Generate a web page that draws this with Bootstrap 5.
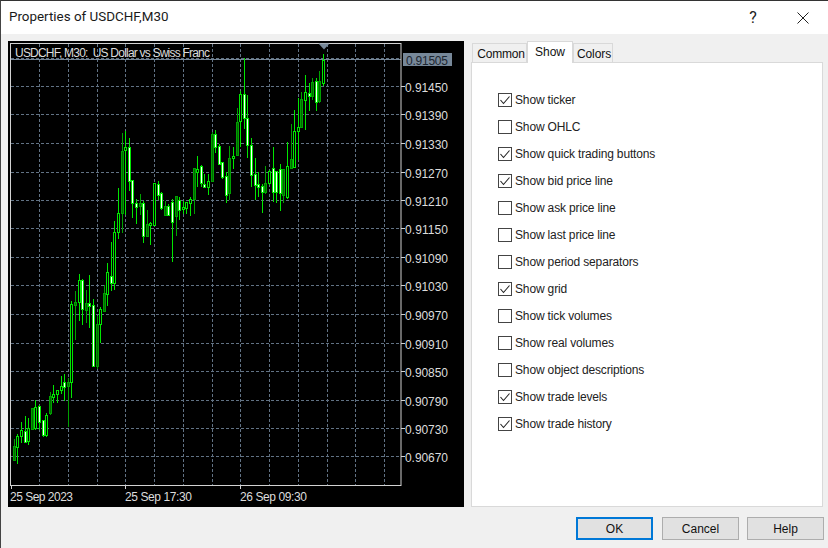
<!DOCTYPE html>
<html lang="en">
<head>
<meta charset="utf-8">
<title>Properties of USDCHF,M30</title>
<link href="https://cdn.jsdelivr.net/npm/bootstrap@5.3.0/dist/css/bootstrap.min.css" rel="stylesheet">
<style>
html,body{height:100%;}
body{margin:0;background:#f0f0f0;overflow:hidden;font-family:"Liberation Sans",sans-serif;font-size:12px;color:#111;}
.dlg-win{width:828px;height:548px;border-top:1px solid #333;border-left:1px solid #444;}
.dlg-title{height:33px;background:#fff;padding:0 0 0 8px;}
.dlg-title-text{font-family:Roboto,"Liberation Sans",sans-serif;font-size:13.4px;color:#1a1a1a;}
.dlg-help{font-family:Roboto,"Liberation Sans",sans-serif;font-size:16px;width:20px;text-align:center;margin-right:34px;color:#222;}
.dlg-close{margin-right:19px;}
.dlg-main{padding:7px 5px 0 7px;gap:7px;height:474px;}
.dlg-chart{width:456px;height:466px;display:block;flex:none;background:#000;}
.dlg-side{width:352px;height:466px;}
.dlg-tabs{height:21px;border:0;padding-left:1px;align-items:flex-end;}
.dlg-tabs .nav-link{height:19px;padding:1px 0 0;text-align:center;font-size:12px;line-height:19px;color:#111;background:#f0f0f0;border:1px solid #d9d9d9;border-bottom:0;border-radius:0;margin:0;}
.dlg-tabs .nav-link.active{height:22px;padding:1px 0 0;line-height:18px;background:#fff;color:#111;border-color:#d9d9d9;position:relative;z-index:1;margin-bottom:-1px;}
.dlg-tabs .nav-link.tab-common{width:55px;padding-left:3px;letter-spacing:-.2px;}
.tab-show{width:46px;}
.dlg-tabs .nav-link.tab-colors{width:40px;padding-left:2px;letter-spacing:-.1px;}
.dlg-pane{background:#fff;border:1px solid #d9d9d9;height:445px;padding:23px 0 0 26px;}
.dlg-check{height:27px;margin:0;padding:0;gap:3px;}
.dlg-check .form-check-input{float:none;margin:0;width:14px;height:14px;border:1px solid #444;border-radius:0;background-color:#fff;box-shadow:none;flex:none;}
.dlg-check .form-check-input:checked{background-color:#fff;border-color:#444;background-size:12px 12px;background-image:url("data:image/svg+xml,%3csvg xmlns='http://www.w3.org/2000/svg' viewBox='0 0 12 12'%3e%3cpath fill='none' stroke='%23222' stroke-width='1.1' d='M1.5 6 L4.5 9.500 L10.500 2.500'/%3e%3c/svg%3e");}
.dlg-check .form-check-label{font-size:12px;letter-spacing:-.15px;color:#222;}
.dlg-foot{padding:9px 4px 0 0;gap:8px;}
.dlg-btn{width:77px;height:23px;padding:1px 0 0;font-size:12px;line-height:19px;background:#e1e1e1;color:#111;border:1px solid #adadad;border-radius:0;}
.dlg-btn-main{border:2px solid #0078d7;line-height:18px;margin-right:1px;}
.dlg-btn:hover{background:#e1e1e1;color:#111;border-color:#adadad;}
.ch-txt{font-family:"Liberation Sans",sans-serif;font-size:12px;fill:#dcdcdc;}
</style>
</head>
<body>
<div class="dlg-win d-flex flex-column">
  <div class="dlg-title d-flex align-items-center">
    <div class="dlg-title-text flex-grow-1">Properties of USDCHF,M30</div>
    <div class="dlg-help">?</div>
    <svg class="dlg-close" width="12" height="12" viewBox="0 0 12 12"><path d="M0.5 0.5 L11.5 11.5 M11.5 0.5 L0.5 11.5" stroke="#222" stroke-width="1" fill="none"/></svg>
  </div>
  <div class="dlg-main d-flex">
    <svg id="chart" class="dlg-chart" viewBox="8 42 456 466" xmlns="http://www.w3.org/2000/svg">
      <g id="grid"></g>
      <path d="M11 60.5 H401" stroke="#778899" stroke-width="1" fill="none"/>
      <g id="bars"></g>
      <rect x="10.5" y="44.5" width="390.5" height="442" fill="none" stroke="#d2d2d2" stroke-width="1"/>
      <path d="M318.500 44.500 H329.500 L324 50.500 Z" fill="#778899"/>
      <g id="ticks"></g>
      <rect x="403" y="54" width="49" height="13" fill="#778899"/>
      <g transform="translate(0 1)">
      <text class="ch-txt" x="15" y="57" textLength="195">USDCHF, M30:&#160;&#160;US Dollar vs Swiss Franc</text>
      <text class="ch-txt" x="406" y="65" textLength="42" style="fill:#1c2530">0.91505</text>
      <text class="ch-txt" x="405" y="92" textLength="43">0.91450</text>
      <text class="ch-txt" x="405" y="120" textLength="43">0.91390</text>
      <text class="ch-txt" x="405" y="149" textLength="43">0.91330</text>
      <text class="ch-txt" x="405" y="178" textLength="43">0.91270</text>
      <text class="ch-txt" x="405" y="206" textLength="43">0.91210</text>
      <text class="ch-txt" x="405" y="234" textLength="43">0.91150</text>
      <text class="ch-txt" x="405" y="263" textLength="43">0.91090</text>
      <text class="ch-txt" x="405" y="291" textLength="43">0.91030</text>
      <text class="ch-txt" x="405" y="320" textLength="43">0.90970</text>
      <text class="ch-txt" x="405" y="349" textLength="43">0.90910</text>
      <text class="ch-txt" x="405" y="377" textLength="43">0.90850</text>
      <text class="ch-txt" x="405" y="406" textLength="43">0.90790</text>
      <text class="ch-txt" x="405" y="434" textLength="43">0.90730</text>
      <text class="ch-txt" x="405" y="462" textLength="43">0.90670</text>
      <text class="ch-txt" x="10" y="501" textLength="63">25 Sep 2023</text>
      <text class="ch-txt" x="125" y="501" textLength="67">25 Sep 17:30</text>
      <text class="ch-txt" x="240" y="501" textLength="67">26 Sep 09:30</text>
      </g>
    </svg>
    <div class="dlg-side d-flex flex-column">
      <ul class="nav nav-tabs dlg-tabs">
        <li class="nav-item"><a class="nav-link tab-common" href="#">Common</a></li>
        <li class="nav-item"><a class="nav-link active tab-show" href="#">Show</a></li>
        <li class="nav-item"><a class="nav-link tab-colors" href="#">Colors</a></li>
      </ul>
      <div class="dlg-pane">
        <div class="form-check dlg-check d-flex align-items-center"><input class="form-check-input" type="checkbox" id="c1" checked><label class="form-check-label" for="c1">Show ticker</label></div>
        <div class="form-check dlg-check d-flex align-items-center"><input class="form-check-input" type="checkbox" id="c2"><label class="form-check-label" for="c2">Show OHLC</label></div>
        <div class="form-check dlg-check d-flex align-items-center"><input class="form-check-input" type="checkbox" id="c3" checked><label class="form-check-label" for="c3">Show quick trading buttons</label></div>
        <div class="form-check dlg-check d-flex align-items-center"><input class="form-check-input" type="checkbox" id="c4" checked><label class="form-check-label" for="c4">Show bid price line</label></div>
        <div class="form-check dlg-check d-flex align-items-center"><input class="form-check-input" type="checkbox" id="c5"><label class="form-check-label" for="c5">Show ask price line</label></div>
        <div class="form-check dlg-check d-flex align-items-center"><input class="form-check-input" type="checkbox" id="c6"><label class="form-check-label" for="c6">Show last price line</label></div>
        <div class="form-check dlg-check d-flex align-items-center"><input class="form-check-input" type="checkbox" id="c7"><label class="form-check-label" for="c7">Show period separators</label></div>
        <div class="form-check dlg-check d-flex align-items-center"><input class="form-check-input" type="checkbox" id="c8" checked><label class="form-check-label" for="c8">Show grid</label></div>
        <div class="form-check dlg-check d-flex align-items-center"><input class="form-check-input" type="checkbox" id="c9"><label class="form-check-label" for="c9">Show tick volumes</label></div>
        <div class="form-check dlg-check d-flex align-items-center"><input class="form-check-input" type="checkbox" id="c10"><label class="form-check-label" for="c10">Show real volumes</label></div>
        <div class="form-check dlg-check d-flex align-items-center"><input class="form-check-input" type="checkbox" id="c11"><label class="form-check-label" for="c11">Show object descriptions</label></div>
        <div class="form-check dlg-check d-flex align-items-center"><input class="form-check-input" type="checkbox" id="c12" checked><label class="form-check-label" for="c12">Show trade levels</label></div>
        <div class="form-check dlg-check d-flex align-items-center"><input class="form-check-input" type="checkbox" id="c13" checked><label class="form-check-label" for="c13">Show trade history</label></div>
      </div>
    </div>
  </div>
  <div class="dlg-foot d-flex justify-content-end">
    <button type="button" class="btn dlg-btn dlg-btn-main">OK</button>
    <button type="button" class="btn dlg-btn">Cancel</button>
    <button type="button" class="btn dlg-btn">Help</button>
  </div>
</div>
<script>
var NS='http://www.w3.org/2000/svg';
function mk(p,n,a){var e=document.createElementNS(NS,n);for(var k in a)e.setAttribute(k,a[k]);p.appendChild(e);return e;}
var ys=[59,87,115,144,173,201,229,258,286,315,344,372,401,429,457];
var grid=document.getElementById('grid'),ticks=document.getElementById('ticks'),bars=document.getElementById('bars');
ys.forEach(function(y,i){
  mk(grid,'path',{d:'M11 '+(y+.5)+' H401',stroke:'#617284','stroke-dasharray':'3 2',fill:'none'});
  if(i)mk(ticks,'path',{d:'M401 '+(y+.5)+' H405',stroke:'#d2d2d2',fill:'none'});
});
for(var i=1;i<=13;i++){
  var x=Math.round(10.25+28.75*i)+.5;
  mk(grid,'path',{d:'M'+x+' 45 V486',stroke:'#617284','stroke-dasharray':'3 2',fill:'none'});
}
[11,125,240].forEach(function(x){mk(ticks,'path',{d:'M'+(x+.5)+' 486 V490',stroke:'#d2d2d2',fill:'none'});});
var d=[[460,462,470,479,'d'],[440,447,461,461,'d'],[435,437,448,464,'b'],[423,431,437,443,'b'],[417,432,443,443,'w'],[419,429,442,445,'b'],[409,409,430,430,'d'],[401,408,429,430,'b'],[406,407,423,430,'w'],[421,421,436,437,'w'],[414,416,436,437,'b'],[393,397,414,415,'d'],[386,395,398,403,'b'],[391,391,395,403,'b'],[377,387,391,394,'b'],[375,383,388,401,'w'],[379,383,387,427,'d'],[302,305,383,398,'b'],[292,303,306,340,'d'],[275,281,303,321,'b'],[280,281,310,325,'w'],[291,304,311,323,'d'],[276,304,307,328,'w'],[300,306,367,367,'w'],[317,325,367,369,'d'],[308,310,325,343,'b'],[286,294,312,312,'d'],[264,273,295,306,'b'],[243,277,284,291,'w'],[222,233,284,290,'b'],[189,214,233,239,'b'],[134,152,214,233,'d'],[132,148,151,215,'b'],[139,148,182,191,'w'],[181,181,204,218,'w'],[200,204,208,224,'w'],[195,204,207,215,'d'],[202,204,237,243,'w'],[211,225,237,237,'d'],[223,224,226,245,'b'],[184,184,226,226,'b'],[182,185,196,200,'w'],[193,194,209,210,'w'],[202,207,216,216,'d'],[205,207,216,216,'w'],[200,203,223,262,'w'],[197,197,217,236,'d'],[198,201,211,220,'w'],[202,208,210,214,'b'],[203,203,209,214,'b'],[198,200,204,216,'b'],[169,169,200,214,'d'],[157,170,173,187,'b'],[166,167,184,187,'w'],[175,185,188,188,'w'],[175,182,188,195,'b'],[133,135,182,182,'d'],[131,135,148,153,'w'],[145,147,165,165,'w'],[163,163,178,179,'w'],[173,177,196,203,'w'],[147,159,194,200,'d'],[148,157,159,169,'b'],[109,123,156,156,'d'],[92,95,122,147,'b'],[59,95,119,129,'w'],[96,119,146,158,'w'],[139,146,176,187,'w'],[159,175,186,200,'w'],[173,185,188,197,'w'],[185,187,193,213,'w'],[167,184,193,194,'d'],[171,172,184,185,'b'],[148,169,193,202,'w'],[172,172,193,203,'w'],[165,170,194,211,'w'],[170,170,196,203,'d'],[143,167,198,199,'b'],[125,160,169,169,'d'],[111,132,168,168,'b'],[99,128,132,160,'b'],[93,100,128,128,'d'],[76,93,101,130,'b'],[84,94,97,111,'w'],[79,83,97,100,'d'],[79,82,103,111,'w'],[72,82,102,103,'d'],[55,61,84,86,'b']];
d.forEach(function(c,i){
  var x=Math.round(10.25+3.594*i)+.5,t=c[4];
  var st=t=='d'?'#00a000':'#00e600',fl=t=='d'?'#006a00':(t=='w'?'#ffffff':'#000000');
  mk(bars,'path',{d:'M'+x+' '+c[0]+' V'+(c[3]+1),stroke:st,fill:'none'});
  if(i>0)mk(bars,'rect',{x:x-1,y:c[1]+.5,width:2,height:Math.max(c[2]-c[1],1),stroke:st,fill:fl});
});
</script>
<script src="https://cdn.jsdelivr.net/npm/bootstrap@5.3.0/dist/js/bootstrap.bundle.min.js"></script>
</body>
</html>
